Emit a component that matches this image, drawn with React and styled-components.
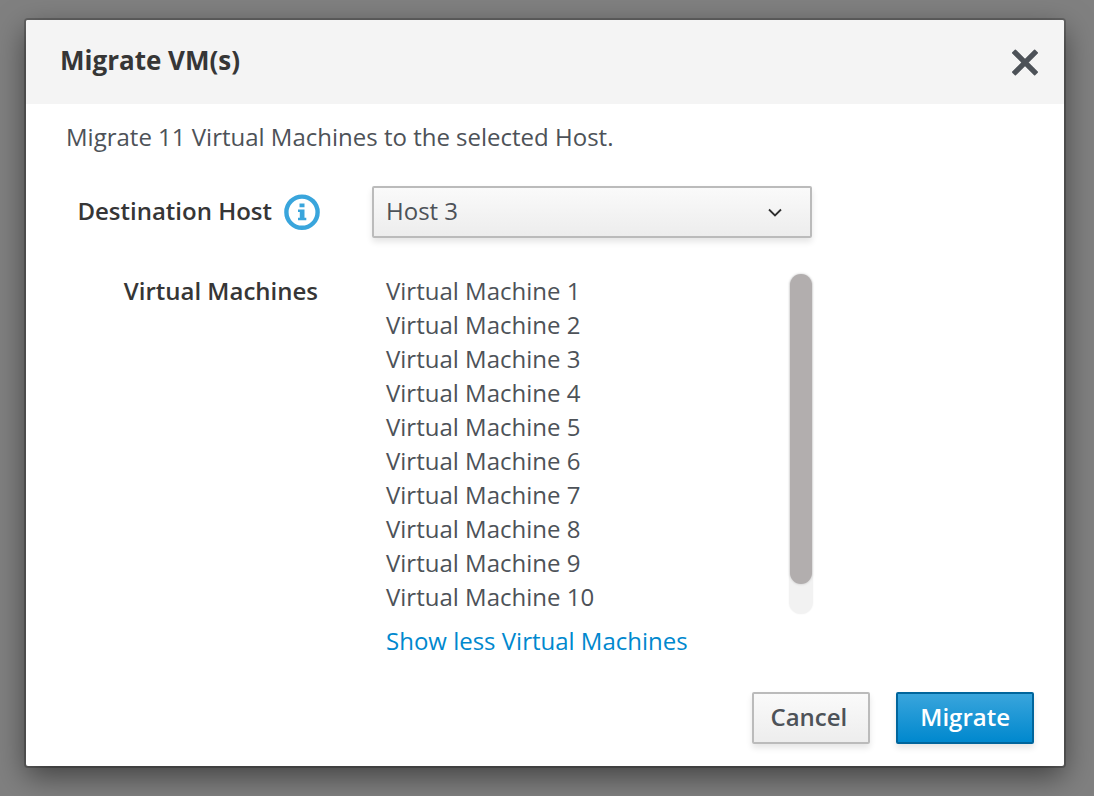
import React, { useState } from "react";
import styled, { createGlobalStyle, css } from "styled-components";

const GlobalStyle = createGlobalStyle`
  *, *::before, *::after { box-sizing: border-box; }
  body {
    margin: 0;
    background: #808080;
    color: #4d5258;
    font: 400 24px/34px "Open Sans", "Noto Sans", sans-serif;
  }
  button, select { font: inherit; }
`;

const Backdrop = styled.div`
  padding: 20px 30px 30px 26px;
`;

const Dialog = styled.section`
  overflow: hidden;
  background: #fff;
  border-radius: 2px;
  box-shadow: 0 0 0 2px rgba(0, 0, 0, 0.22), 0 10px 30px rgba(0, 0, 0, 0.5);
`;

const Header = styled.header`
  display: flex;
  align-items: center;
  justify-content: space-between;
  height: 84px;
  padding: 0 20px 0 34px;
  background: #f4f4f4;
`;

const Title = styled.h1`
  margin: 0;
  padding-bottom: 4px;
  color: #363636;
  font-size: 26px;
  font-weight: 700;
  line-height: 36px;
`;

const CloseButton = styled.button`
  display: flex;
  padding: 4px;
  border: 0;
  background: none;
  color: #4d5258;
  cursor: pointer;
`;

const Body = styled.div`
  padding: 16px 40px 34px;
`;

const Description = styled.p`
  margin: 0 0 32px;
`;

const Form = styled.form`
  display: grid;
  grid-template-columns: 254px minmax(0, 440px);
  column-gap: 52px;
  row-gap: 36px;
`;

const LabelCell = styled.div`
  display: flex;
  align-items: center;
  justify-content: flex-end;
  gap: 12px;
  height: ${(p) => (p.$tall ? "52px" : "34px")};
  padding-right: ${(p) => (p.$inset ? "2px" : "0")};
  color: #363636;
  font-weight: 600;
  white-space: nowrap;
`;

const FieldLabel = styled.label`
  padding-bottom: 2px;
`;

const InfoButton = styled.button`
  display: flex;
  padding: 0;
  border: 0;
  background: none;
  color: #39a5dc;
  cursor: pointer;
`;

const raised = css`
  height: 52px;
  border: 2px solid #bbb;
  border-radius: 2px;
  background: linear-gradient(#fafafa, #ededed);
  box-shadow: 0 4px 6px rgba(3, 3, 3, 0.1);
  color: #4d5258;
  cursor: pointer;
`;

const SelectBox = styled.div`
  display: grid;
  align-items: center;
  > * { grid-area: 1 / 1; }
  > svg {
    justify-self: end;
    margin-right: 30px;
    pointer-events: none;
  }
`;

const Select = styled.select`
  ${raised}
  appearance: none;
  width: 100%;
  padding: 0 60px 2px 12px;
`;

const ScrollArea = styled.div`
  display: flex;
  height: 340px;
`;

const Viewport = styled.div`
  flex: 1;
  padding-left: 14px;
  overflow-y: auto;
  scrollbar-width: none;
`;

const MachineList = styled.ul`
  margin: 0;
  padding: 0;
  list-style: none;
`;

const Track = styled.div`
  width: 24px;
  margin-right: -1px;
  padding: 0 1px;
  border-radius: 12px;
  background: #f2f2f2;
  box-shadow: 0 0 2px rgba(0, 0, 0, 0.06);
`;

const Thumb = styled.div`
  height: 310px;
  border-radius: 11px;
  background: #b2aeae;
  box-shadow: 0 0 3px rgba(0, 0, 0, 0.2);
`;

const ToggleLink = styled.a`
  display: inline-block;
  margin: 10px 0 0 14px;
  color: #0088ce;
  text-decoration: none;
`;

const Footer = styled.footer`
  display: flex;
  justify-content: flex-end;
  gap: 26px;
  padding: 0 30px 22px;
`;

const Button = styled.button`
  ${raised}
  padding: 0 21px 2px 16px;
  font-weight: 600;
  ${(p) =>
    p.$primary &&
    css`
      padding: 0 22px 2px;
      border-color: #00659c;
      background: linear-gradient(#39a5dc, #0088ce);
      color: #fff;
    `}
`;

const CloseIcon = () => (
  <svg width="30" height="30" viewBox="0 0 30 30" aria-hidden="true">
    <path
      d="M2.8 5.9L5.4 3.3 27.2 25.1 24.6 27.7zM5.4 27.7L2.8 25.1 24.6 3.3 27.2 5.9z"
      fill="currentColor"
      stroke="currentColor"
      strokeWidth="1.6"
      strokeLinejoin="round"
    />
  </svg>
);

const InfoIcon = () => (
  <svg width="36" height="36" viewBox="0 0 36 36" aria-hidden="true">
    <circle cx="18" cy="18.2" r="15.6" fill="none" stroke="currentColor" strokeWidth="4.4" />
    <path
      d="M15.5 9.5h5v3.8h-5zM14 15.5h6.500v8.300h1.800v2.500h-8.300v-2.500h1.800v-5.800h-1.800z"
      fill="currentColor"
    />
  </svg>
);

const ChevronIcon = () => (
  <svg width="14" height="10" viewBox="0 0 14 10" aria-hidden="true">
    <path d="M1 2.500l6 6L13 2.500" fill="none" stroke="#303030" strokeWidth="1.8" />
  </svg>
);

const machines = Array.from({ length: 11 }, (_, i) => `Virtual Machine ${i + 1}`);
const ROW = 34;
const VIEW = 340;

export default function App() {
  const [host, setHost] = useState("Host 3");
  const [scroll, setScroll] = useState(0);

  // Only the rows inside the viewport are rendered.
  const first = Math.max(0, Math.floor(scroll / ROW));
  const last = Math.ceil((scroll + VIEW) / ROW);

  return (
    <>
      <GlobalStyle />
      <Backdrop>
        <Dialog role="dialog" aria-labelledby="dialog-title">
          <Header>
            <Title id="dialog-title">Migrate VM(s)</Title>
            <CloseButton type="button" aria-label="Close">
              <CloseIcon />
            </CloseButton>
          </Header>
          <Body>
            <Description>Migrate 11 Virtual Machines to the selected Host.</Description>
            <Form>
              <LabelCell $tall>
                <FieldLabel htmlFor="host">Destination Host</FieldLabel>
                <InfoButton type="button" aria-label="About the destination host">
                  <InfoIcon />
                </InfoButton>
              </LabelCell>
              <SelectBox>
                <Select id="host" value={host} onChange={(e) => setHost(e.target.value)}>
                  <option>Host 1</option>
                  <option>Host 2</option>
                  <option>Host 3</option>
                </Select>
                <ChevronIcon />
              </SelectBox>
              <LabelCell $inset id="machines-label">
                Virtual Machines
              </LabelCell>
              <div>
                <ScrollArea>
                  <Viewport tabIndex={0} onScroll={(e) => setScroll(e.currentTarget.scrollTop)}>
                    <MachineList
                      aria-labelledby="machines-label"
                      style={{ height: machines.length * ROW, paddingTop: first * ROW }}
                    >
                      {machines.slice(first, last).map((name) => (
                        <li key={name}>{name}</li>
                      ))}
                    </MachineList>
                  </Viewport>
                  <Track aria-hidden="true">
                    <Thumb
                      style={{
                        transform: `translateY(${Math.max(0, Math.min(30, (scroll * 30) / ROW))}px)`,
                      }}
                    />
                  </Track>
                </ScrollArea>
                <ToggleLink href="#machines-label">Show less Virtual Machines</ToggleLink>
              </div>
            </Form>
          </Body>
          <Footer>
            <Button type="button">Cancel</Button>
            <Button type="button" $primary>
              Migrate
            </Button>
          </Footer>
        </Dialog>
      </Backdrop>
    </>
  );
}
